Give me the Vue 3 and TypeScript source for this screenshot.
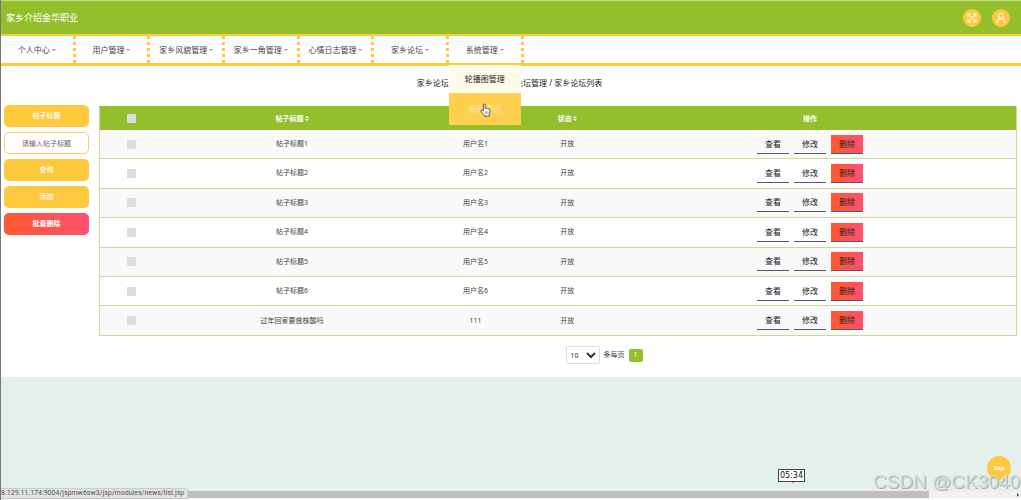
<script setup lang="ts">
import { ref } from 'vue'

interface Post {
  title: string
  user: string
  status: string
}

const menus: string[] = ['个人中心', '用户管理', '家乡风貌管理', '家乡一角管理', '心情日志管理', '家乡论坛', '系统管理']

const posts: Post[] = [
  ...[1, 2, 3, 4, 5, 6].map((n) => ({ title: `帖子标题${n}`, user: `用户名${n}`, status: '开放' })),
  { title: '过年回家要做核酸吗', user: '111', status: '开放' },
]

const keyword = ref('')
const pageSize = ref('10')
</script>

<template>
  <div class="page">
    <header class="topbar">
      <h1 class="brand">家乡介绍金华职业</h1>
      <div class="tools">
        <button class="round" type="button" aria-label="全屏">
          <svg viewBox="0 0 18 18" width="18" height="18" fill="none" stroke="#fff3cc" stroke-width="1.3">
            <path d="M5 8V5h3M10 5h3v3M13 10v3h-3M8 13H5v-3M5 5l8 8M13 5l-8 8" />
          </svg>
        </button>
        <button class="round" type="button" aria-label="用户">
          <svg viewBox="0 0 18 18" width="18" height="18" fill="none" stroke="#fff3cc" stroke-width="1.3">
            <circle cx="9" cy="7" r="2.4" />
            <path d="M4.8 13.6c.2-2.3 1.7-3.6 4.2-3.6s4 1.3 4.2 3.6M4.6 13.4h2.2M11.2 13.4h2.2" />
          </svg>
        </button>
      </div>
    </header>

    <nav class="nav">
      <div v-for="(menu, i) in menus" :key="menu" class="nav-item">
        <a class="nav-link" href="#">{{ menu }}<span class="caret"></span></a>
        <div v-if="i === menus.length - 1" class="dropdown">
          <a class="drop-link" href="#">轮播图管理</a>
          <a class="drop-link active" href="#">新闻资讯</a>
          <svg class="pointer" viewBox="0 0 12 16" width="11" height="14">
            <path
              d="M3.5 9.2V2.1C3.5.6 5.6.6 5.6 2.1v4.2c.3-.8 1.8-.7 2 .2.5-.6 1.700-.4 1.800.5.6-.4 1.700-.1 1.700.9v3.200c0 1-.8 1.600-.8 2.600v1.400H4.600v-1.200C3.600 12.900 1.800 10.800.800 9.100.300 8 1.500 7.400 2.300 8.100z"
              fill="#fff" stroke="#333" stroke-width=".9" stroke-linejoin="round"
            />
            <path d="M5.800 9.500v3M7.400 9.500v3M9 9.500v3" stroke="#555" stroke-width=".6" />
          </svg>
        </div>
      </div>
    </nav>

    <main class="content">
      <div class="crumbs">
        <span>家乡论坛管理</span>
        <span>首页&nbsp; / &nbsp;家乡论坛管理 / 家乡论坛列表</span>
      </div>

      <div class="layout">
        <form class="side" @submit.prevent>
          <label class="side-box fill" for="keyword">帖子标题</label>
          <input id="keyword" v-model="keyword" class="side-box field" type="text" placeholder="请输入帖子标题" />
          <button class="side-box fill" type="submit">查询</button>
          <button class="side-box fill" type="button">添加</button>
          <button class="side-box danger" type="button">批量删除</button>
        </form>

        <section class="list">
          <table class="grid">
            <colgroup>
              <col class="c-check" />
              <col class="c-title" />
              <col class="c-user" />
              <col class="c-status" />
              <col />
            </colgroup>
            <thead>
              <tr>
                <th><input class="tick" type="checkbox" aria-label="全选" /></th>
                <th>帖子标题<span class="sort"></span></th>
                <th>用户名<span class="sort"></span></th>
                <th>状态<span class="sort"></span></th>
                <th>操作</th>
              </tr>
            </thead>
            <tbody>
              <tr v-for="post in posts" :key="post.title">
                <td><input class="tick" type="checkbox" :aria-label="post.title" /></td>
                <td>{{ post.title }}</td>
                <td>{{ post.user }}</td>
                <td>{{ post.status }}</td>
                <td>
                  <div class="actions">
                    <button class="act" type="button">查看</button>
                    <button class="act" type="button">修改</button>
                    <button class="act remove" type="button">删除</button>
                  </div>
                </td>
              </tr>
            </tbody>
          </table>

          <div class="pager">
            <select id="size" v-model="pageSize" class="size">
              <option>10</option>
              <option>25</option>
              <option>50</option>
            </select>
            <label for="size">条每页</label>
            <button class="page-no" type="button">1</button>
          </div>
        </section>
      </div>
    </main>

    <button class="to-top" type="button">Top</button>
    <div class="clock">05:34</div>
    <div class="watermark">CSDN @CK3040</div>
    <div class="scrollbar"><div class="thumb"></div><span class="arrow"></span></div>
    <div class="status">8.129.11.174:9004/jspmw6sw3/jsp/modules/news/list.jsp</div>
  </div>
</template>

<style>
body {
  margin: 0;
  background: #e4f0eb;
}
</style>

<style scoped>
.page {
  position: relative;
  box-sizing: border-box;
  min-height: 100vh;
  overflow: hidden;
  border-left: 1px solid #777;
  background: #e4f0eb;
  color: #444;
  font: 8px/12px "Noto Sans", "Noto Sans CJK SC", sans-serif;
}
button,
input,
select {
  box-sizing: border-box;
  margin: 0;
  padding: 0;
  font: inherit;
}
a {
  color: inherit;
  text-decoration: none;
}
.topbar {
  display: flex;
  box-sizing: border-box;
  height: 36px;
  align-items: center;
  justify-content: space-between;
  padding: 0 11px 0 5px;
  border-top: 1px solid #c5dc8e;
  border-bottom: 2px solid #ffc93d;
  background: #93bf2c;
}
.brand {
  margin: 0;
  color: #fff;
  font-size: 9px;
  font-weight: 400;
}
.tools {
  display: flex;
  gap: 11px;
}
.round {
  width: 18px;
  height: 18px;
  border: 0;
  border-radius: 50%;
  background: #ffc93d;
}
.round svg {
  display: block;
}
.nav {
  display: flex;
  box-sizing: border-box;
  height: 30px;
  border-bottom: 3px solid #ffc93d;
  background: #fff;
}
.nav-item {
  position: relative;
  box-sizing: border-box;
  width: 7.32%;
  border-right: 3px dotted #ffc93d;
}
.nav-link {
  display: flex;
  height: 27px;
  align-items: center;
  justify-content: center;
  gap: 2px;
  white-space: nowrap;
}
.caret {
  border: 2px solid transparent;
  border-top-color: #999;
  border-bottom: 0;
}
.dropdown {
  position: absolute;
  z-index: 2;
  top: 29px;
  left: 0;
  width: 100%;
  background: #fffbeb;
  text-align: center;
}
.drop-link {
  display: block;
  padding: 8px 0;
  color: #222;
}
.drop-link.active {
  padding: 10px 0;
  background: #ffd050;
  color: #ffeaaa;
}
.pointer {
  position: absolute;
  top: 38px;
  left: 31px;
}
.content {
  padding: 10px 4px 13px 3px;
  background: #fff;
}
.crumbs {
  display: flex;
  justify-content: center;
  gap: 7px;
  padding: 0 2px 16px 0;
  color: #222;
  line-height: 13px;
}
.layout {
  display: flex;
  gap: 10px;
  align-items: flex-start;
}
.side {
  display: flex;
  width: 85px;
  flex: none;
  flex-direction: column;
  gap: 5px;
}
.side-box {
  display: block;
  box-sizing: border-box;
  width: 100%;
  height: 22px;
  border: 0;
  border-radius: 5px;
  font-size: 7px;
  line-height: 22px;
  text-align: center;
}
.fill {
  background: #ffc93d;
  color: #fff;
  font-weight: 500;
}
.field {
  border: 1px solid #f1cf6b;
  background: #fff;
  line-height: 20px;
}
.field::placeholder {
  color: #666;
}
.danger {
  background: linear-gradient(90deg, #ff5a2e, #ff5070);
  color: #fff;
  font-weight: 700;
}
.list {
  min-width: 0;
  flex: 1;
  padding-top: 1px;
}
.grid {
  width: 100%;
  height: 230px;
  border: 1px solid #c9d99c;
  border-top-color: #93bf2c;
  border-collapse: collapse;
  table-layout: fixed;
  font-size: 7px;
  text-align: center;
}
.c-check {
  width: 7%;
}
.c-title {
  width: 28%;
}
.c-user {
  width: 12%;
}
.c-status {
  width: 8%;
}
th,
td {
  padding: 0;
}
th {
  height: 23px;
  background: #93bf2c;
  color: #fff;
  font-weight: 700;
}
td {
  border-bottom: 1px solid #c9d99c;
}
tbody tr {
  background: #fff;
}
tbody tr:nth-child(odd) {
  background: #f9f9f9;
}
.tick {
  display: block;
  width: 9px;
  height: 9px;
  margin: 0 auto;
  appearance: none;
  background: #dcdde0;
}
.sort {
  display: inline-flex;
  height: 5px;
  flex-direction: column;
  justify-content: space-between;
  margin-left: 1px;
  vertical-align: middle;
}
.sort::before,
.sort::after {
  border: 2px solid transparent;
  content: "";
}
.sort::before {
  border-top: 0;
  border-bottom-color: #fff;
}
.sort::after {
  border-top-color: #fff;
  border-bottom: 0;
}
.actions {
  display: flex;
  justify-content: center;
  gap: 5px;
}
.act {
  width: 32px;
  height: 19px;
  border: 0;
  border-bottom: 1px solid #55586a;
  background: transparent;
  color: #222;
  font-size: 8px;
}
.remove {
  background: linear-gradient(90deg, #ff5a2e, #ff5070);
}
.pager {
  display: flex;
  align-items: center;
  justify-content: center;
  gap: 4px;
  padding-top: 10px;
  padding-left: 92px;
  font-size: 7px;
}
.size {
  width: 34px;
  height: 18px;
  border: 1px solid #ddd;
  border-radius: 2px;
  background: #fff;
  color: #333;
}
.page-no {
  width: 14px;
  height: 13px;
  border: 0;
  border-radius: 2px;
  background: #93bf2c;
  color: #fff;
}
.to-top {
  position: absolute;
  right: 10px;
  bottom: 20px;
  width: 24px;
  height: 24px;
  border: 0;
  border-radius: 50%;
  background: #ffc93d;
  color: #fff;
  font: 700 7px "Liberation Serif", serif;
}
.clock {
  position: absolute;
  right: 216px;
  bottom: 18px;
  padding: 0 1px;
  border: 1px solid #444;
  background: #fff;
  color: #111;
  font: 8px/11px "DejaVu Sans", sans-serif;
}
.clock::after {
  position: absolute;
  top: 100%;
  left: 50%;
  border: 2px solid transparent;
  border-top-color: #444;
  border-bottom: 0;
  content: "";
}
.watermark {
  position: absolute;
  z-index: 3;
  right: 1px;
  bottom: 7px;
  color: #d3dad7;
  font: 19px/22px "Liberation Sans", sans-serif;
  text-shadow: 1px 1px 0 #a9b1ad;
}
.scrollbar {
  position: absolute;
  right: 0;
  bottom: 0;
  left: 0;
  display: flex;
  height: 7px;
  align-items: center;
  justify-content: space-between;
  border-bottom: 2px solid #fafafa;
  background: #f1f1f1;
}
.thumb {
  width: 91%;
  height: 7px;
  background: #bfbfbf;
}
.arrow {
  margin-right: 2px;
  border: 2px solid transparent;
  border-right: 0;
  border-left-color: #444;
}
.status {
  position: absolute;
  bottom: 1px;
  left: -1px;
  box-sizing: border-box;
  padding: 0 3px 0 1px;
  border: 1px solid #c8cccb;
  border-left: 0;
  border-radius: 0 3px 0 0;
  background: #dfe3e2;
  color: #555;
  font: 7px/9px Roboto, sans-serif;
}
</style>
